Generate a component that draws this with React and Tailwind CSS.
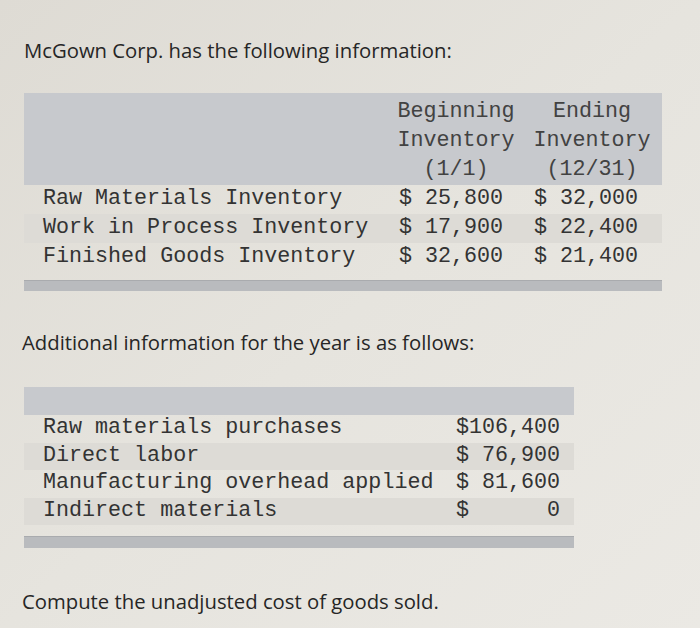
const inventory = [
  { label: 'Raw Materials Inventory', begin: '$ 25,800', end: '$ 32,000' },
  { label: 'Work in Process Inventory', begin: '$ 17,900', end: '$ 22,400', shade: true },
  { label: 'Finished Goods Inventory', begin: '$ 32,600', end: '$ 21,400' },
];

const additional = [
  { label: 'Raw materials purchases', value: '$106,400' },
  { label: 'Direct labor', value: '$ 76,900', shade: true },
  { label: 'Manufacturing overhead applied', value: '$ 81,600' },
  { label: 'Indirect materials', value: '$      0', shade: true },
];

const sans = { fontFamily: '"Open Sans", Lato, sans-serif' };
const mono = { fontFamily: '"Liberation Mono", "Courier New", monospace' };

export default function App() {
  return (
    <div
      className="w-[700px] h-[628px] overflow-hidden bg-gradient-to-br from-[#dedbd4] via-[#e6e4de] to-[#ebe9e4] pl-[24px] pt-[37px] text-[#262626]"
      style={sans}
    >
      <p className="text-[20.3px] leading-[26px]">McGown Corp. has the following information:</p>

      <div className="mt-[30px] w-[638px] text-[21.7px] text-[#333]" style={mono}>
        <div className="flex bg-[#c7c9cd] pt-[4px] pb-[1px] leading-[29px] text-[#424242]">
          <div className="w-[366px]" />
          <div className="w-[132px] text-center">
            <div>Beginning</div>
            <div>Inventory</div>
            <div>(1/1)</div>
          </div>
          <div className="w-[140px] text-center">
            <div>Ending</div>
            <div>Inventory</div>
            <div>(12/31)</div>
          </div>
        </div>
        {inventory.map((row) => (
          <div
            key={row.label}
            className={`flex h-[29px] items-center whitespace-pre ${row.shade ? 'bg-[#dddbd6]' : ''}`}
          >
            <div className="w-[366px] pl-[19px]">{row.label}</div>
            <div className="w-[132px] pl-[9px]">{row.begin}</div>
            <div className="w-[140px] pl-[12px]">{row.end}</div>
          </div>
        ))}
        <div className="mt-[8px] h-[11px] border-t border-[#a9abae] bg-[#b9bbbe]" />
      </div>

      <p className="mt-[38px] -ml-[2px] text-[20.3px] leading-[26px]">
        Additional information for the year is as follows:
      </p>

      <div className="mt-[32px] w-[550px] text-[21.7px] text-[#333]" style={mono}>
        <div className="h-[28px] bg-[#c7c9cd]" />
        {additional.map((row) => (
          <div
            key={row.label}
            className={`flex h-[27.5px] items-center justify-between whitespace-pre pl-[19px] pr-[14px] ${row.shade ? 'bg-[#dddbd6]' : ''}`}
          >
            <span>{row.label}</span>
            <span>{row.value}</span>
          </div>
        ))}
        <div className="mt-[11px] h-[12px] border-t border-[#a9abae] bg-[#b9bbbe]" />
      </div>

      <p className="mt-[40px] -ml-[2px] text-[20.3px] leading-[26px]">
        Compute the unadjusted cost of goods sold.
      </p>
    </div>
  );
}
